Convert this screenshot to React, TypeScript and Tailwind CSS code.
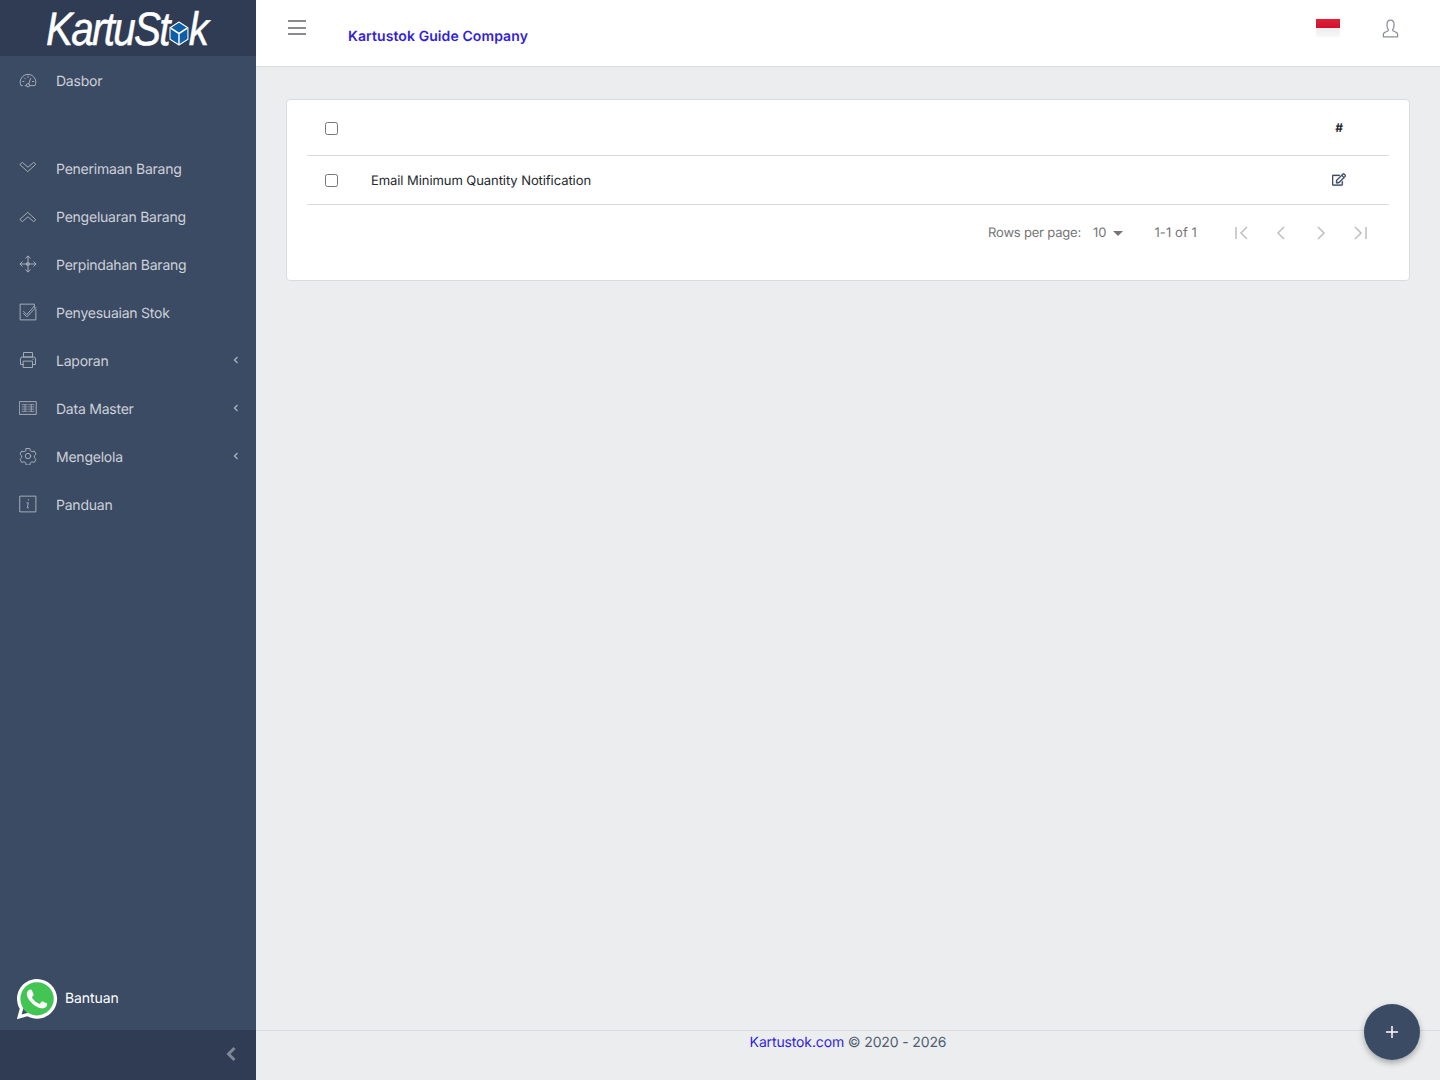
import React from "react";
import { FaRegEdit, FaWhatsapp } from "react-icons/fa";

const sw = { fill: "none", stroke: "currentColor", strokeWidth: 1.3, strokeLinecap: "round" as const, strokeLinejoin: "round" as const };

const Ico = ({ children }: { children: React.ReactNode }) => (
  <svg viewBox="0 0 24 24" className="w-[18px] h-[18px]" {...sw}>{children}</svg>
);

const icons: Record<string, React.ReactNode> = {
  gauge: <Ico><path d="M4.500 19.500H2.600A10.500 10.500 0 0 1 12 4.500a10.500 10.500 0 0 1 9.400 15h-6.600" /><path d="M9.200 19.500h-1" /><circle cx="12" cy="19" r="2.200" /><path d="M13 17l2.500-7M5 14h1.600M18 14h1.500M7.500 9.500l1 1M12 7v1.600" /></Ico>,
  down: <Ico><path d="M1.500 7 4.500 4.500 12 11l7.500-6.500L22.500 7 12 16.500z" /></Ico>,
  up: <Ico><path d="M1.500 17 4.500 19.500 12 13l7.500 6.500L22.500 17 12 7.500z" /></Ico>,
  move: <Ico><path d="M12 1.500v21M1.500 12h21M9 4.200 12 1.500l3 2.700M9 19.800l3 2.700 3-2.700M4.200 9 1.500 12l2.700 3M19.800 9l2.700 3-2.700 3" /><path d="M10.500 10.500h3v3h-3z" /></Ico>,
  task: <Ico><path d="M20.500 6.500V1.500H1.500v21h21V8.500" /><path d="M6 11l4.500 4.500L20 4.500" /><path d="M6 14l4.500 4.500L22.500 6" /></Ico>,
  print: <Ico><path d="M6 8V2h12v6" /><path d="M6 8h12M6 18H2V10.500A2.500 2.500 0 0 1 4.500 8h15a2.500 2.500 0 0 1 2.500 2.500V18h-4" /><path d="M6 13.500h12V22H6z" /><path d="M18.500 11h.5" /></Ico>,
  sheet: <Ico><path d="M1 3.500h22v17H1z" /><path d="M4 7.500h7M4 10.500h7M4 13.500h7M4 16.500h7M13 7.500h7M13 10.500h7M13 13.500h7M13 16.500h7M8 7.500v9M16.500 7.500v9" strokeWidth="1" /></Ico>,
  gear: <Ico><path d="M9.600 2h4.800l.7 3 2.300 1.300 3-.9 2.300 4.100-2.200 2.100v2.800l2.200 2.100-2.300 4.100-3-.9-2.300 1.300-.7 3H9.600l-.7-3-2.300-1.300-3 .9-2.300-4.100 2.200-2.100v-2.800L1.300 9.500l2.300-4.100 3 .9 2.300-1.300z" /><circle cx="12" cy="12" r="3.600" /></Ico>,
  info: <Ico><path d="M1.500 1.500h21v21h-21z" /><path d="M12.200 6.500h.6M10.500 10.500h2l-1.500 6.200c-.2.9.6 1.200 2 .1" /></Ico>,
};

const menu = [
  { label: "Penerimaan Barang", icon: "down" },
  { label: "Pengeluaran Barang", icon: "up" },
  { label: "Perpindahan Barang", icon: "move" },
  { label: "Penyesuaian Stok", icon: "task" },
  { label: "Laporan", icon: "print", arrow: true },
  { label: "Data Master", icon: "sheet", arrow: true },
  { label: "Mengelola", icon: "gear", arrow: true },
  { label: "Panduan", icon: "info" },
];

function NavItem({ label, icon, arrow }: { label: string; icon: string; arrow?: boolean }) {
  return (
    <div className="flex items-center h-12 pl-[19px] pr-[17px] text-[14px] text-[#ccd0d8]">
      <span className="w-[37px] -mt-[1px] text-[#a7aeba] shrink-0">{icons[icon]}</span>
      <span className="flex-1 mt-[2px] tracking-[-0.23px]">{label}</span>
      {arrow && (
        <svg viewBox="0 0 8 10" className="w-[6px] h-[8px] -mt-[1px] text-[#aab0bc]" fill="none" stroke="currentColor" strokeWidth="1.800"><path d="M6 1 2 5l4 4" /></svg>
      )}
    </div>
  );
}

function Logo() {
  return (
    <div className="h-14 bg-[#303c54] flex items-center justify-center shrink-0 overflow-hidden pr-[3px]">
      <div className="flex items-center italic text-white text-[47px] leading-none tracking-[-2px] scale-x-[0.86] [-webkit-text-stroke:0.5px_white] [font-family:'Liberation_Sans',sans-serif]">
        <span>KartuSt</span>
        <svg viewBox="0 0 24 24" className="w-[27px] h-[25px] -ml-[2px] -mr-[2px] mt-[10px]">
          <path d="M12 1 22 6.500v11L12 23 2 17.500v-11z" fill="#0d5fa8" stroke="#fff" strokeWidth="1.200" strokeLinejoin="round" />
          <path d="M3 7l9 5 9-5M12 12v10" fill="none" stroke="#fff" strokeWidth="1.600" />
        </svg>
        <span>k</span>
      </div>
    </div>
  );
}

const PagIcon = ({ d }: { d: string }) => (
  <span className="w-10 flex justify-center text-[#bfbfbf]">
    <svg viewBox="0 0 24 24" className="w-[24px] h-[24px]" fill="none" stroke="currentColor" strokeWidth="1.500"><path d={d} /></svg>
  </span>
);

export default function App() {
  return (
    <div className="flex h-screen overflow-hidden bg-[#ebedef] [font-family:Inter,sans-serif] [text-rendering:geometricPrecision]">
      <aside className="w-64 shrink-0 flex flex-col bg-[#3c4b64]">
        <Logo />
        <nav className="flex-1 flex flex-col">
          <NavItem label="Dasbor" icon="gauge" />
          <div className="h-10" />
          {menu.map((m) => (
            <NavItem key={m.label} {...m} />
          ))}
        </nav>
        <div className="flex items-center h-[64px] pl-[17px] gap-2 text-[14px] text-white">
          <span className="relative w-10 h-10 mt-[2px] flex items-center justify-center">
            <span className="absolute left-[3px] top-[3px] w-[34px] h-[34px] rounded-full bg-[#43c553]" />
            <FaWhatsapp className="relative shrink-0 w-[46px] h-[46px] text-white" />
          </span>
          <span className="tracking-[-0.1px]">Bantuan</span>
        </div>
        <div className="h-[50px] bg-[#303c54] flex items-center justify-end pr-[19px] pb-[2px] text-[#7f8899]">
          <svg viewBox="0 0 12 16" className="w-[12px] h-[16px]" fill="none" stroke="currentColor" strokeWidth="3"><path d="M9.500 2 3.500 8l6 6" /></svg>
        </div>
      </aside>

      <div className="flex-1 flex flex-col min-w-0">
        <header className="h-[67px] shrink-0 bg-white border-b border-[#d8dbe0] flex items-start">
          <div className="w-[18px] ml-[32px] mt-[20px] flex flex-col gap-[4.5px]">
            <span className="h-[2px] bg-[#8a8a96]" />
            <span className="h-[2px] bg-[#8a8a96]" />
            <span className="h-[2px] bg-[#8a8a96]" />
          </div>
          <a className="ml-[42px] mt-[28px] text-[14px] leading-[18px] font-semibold tracking-[0.09px] text-[#321fdb]">Kartustok Guide Company</a>
          <div className="ml-auto flex items-start">
            <div className="mt-[19px] w-[24px] h-[18px] flex flex-col">
              <span className="h-[9px] bg-linear-to-b from-[#e22036] to-[#cf1030]" />
              <span className="h-[9px] bg-linear-to-b from-[#ececec] to-[#f8f8f8]" />
            </div>
            <svg viewBox="0 0 24 24" className="mt-[19px] ml-[41px] mr-[40px] w-[19px] h-[19px] text-[#8a8f9a]" fill="none" stroke="currentColor" strokeWidth="1.600" strokeLinejoin="round">
              <path d="M3 22.500v-2.800c0-2 1.500-3 3.500-3.600 2-.6 3-1.400 3-2.600-1.300-1.300-2-3.400-2-6C7.500 4 9.300 1.500 12 1.500S16.500 4 16.500 7.500c0 2.600-.7 4.700-2 6 0 1.200 1 2 3 2.600 2 .6 3.500 1.600 3.500 3.600v2.800z" />
            </svg>
          </div>
        </header>

        <main className="flex-1 px-[30px] pt-[32px]">
          <div className="h-[182px] bg-white border border-[#d8dbe0] rounded-[4px] px-[20px] text-[13px] text-[#23282c]">
            <div className="h-[56px] border-b border-[#d8dbe0] flex items-center">
              <input type="checkbox" className="ml-[18px] mt-[1px]" />
              <span className="ml-auto mr-[46px] font-bold text-[12px] mt-[1px] text-[#23282c]">#</span>
            </div>
            <div className="h-[49px] border-b border-[#d8dbe0] flex items-center">
              <input type="checkbox" className="ml-[18px]" />
              <span className="ml-[33px] mt-[3px] tracking-[-0.07px]">Email Minimum Quantity Notification</span>
              <FaRegEdit stroke="currentColor" strokeWidth={10} className="ml-auto mr-[43px] w-[14px] h-[15px] -mt-[2px] text-[#3c4b64]" />
            </div>
            <div className="flex items-center justify-end h-[56px] text-[13px] text-[#757575]">
              <span className="mt-[2px] tracking-[-0.2px]">Rows per page:</span>
              <span className="ml-[12px] mt-[2px]">10</span>
              <span className="ml-[7px] w-0 h-0 border-x-[5px] border-x-transparent border-t-[5px] border-t-[#757575]" />
              <span className="ml-[31px] mt-[2px] tracking-[0.1px]">1-1 of 1</span>
              <div className="ml-[24px] mr-[8px] flex">
                <PagIcon d="M7 6v12M18 6l-6 6 6 6" />
                <PagIcon d="M15 6l-6 6 6 6" />
                <PagIcon d="M9 6l6 6-6 6" />
                <PagIcon d="M6 6l6 6-6 6M17 6v12" />
              </div>
            </div>
          </div>
        </main>

        <footer className="h-[50px] shrink-0 border-t border-[#d8dbe0] pt-[2px] text-center text-[14px] leading-[20px] tracking-[-0.14px] text-[#4f5d73]">
          <a className="text-[#321fdb]">Kartustok.com</a> © 2020 - 2026
        </footer>
      </div>

      <button className="absolute left-[1364px] top-[1004px] w-14 h-14 rounded-full bg-[#3c4b64] text-white flex items-center justify-center shadow-[0_3px_6px_rgba(0,0,0,0.3)]">
        <svg viewBox="0 0 12 12" className="w-3 h-3" fill="none" stroke="currentColor" strokeWidth="1.500"><path d="M6 0v12M0 6h12" /></svg>
      </button>
    </div>
  );
}
